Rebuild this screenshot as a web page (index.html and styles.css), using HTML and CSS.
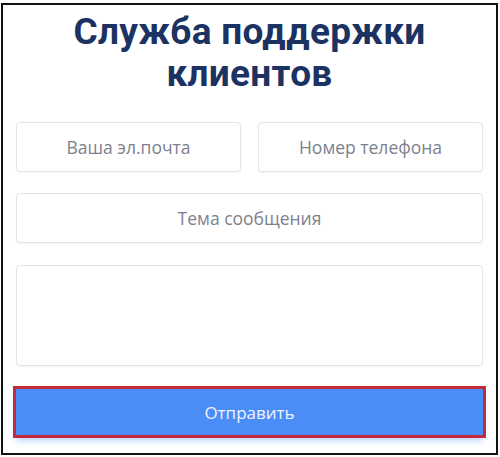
FILE: index.html
```html
<!DOCTYPE html>
<html lang="ru">
<head>
<meta charset="utf-8">
<title>Служба поддержки клиентов</title>
<link rel="stylesheet" href="styles.css">
</head>
<body>
<div class="frame">
  <h1 class="title">Служба поддержки<br>клиентов</h1>
  <form class="form">
    <div class="row">
      <div class="field">Ваша эл.почта</div>
      <div class="field">Номер телефона</div>
    </div>
    <div class="field">Тема сообщения</div>
    <div class="field area"></div>
    <div class="button">Отправить</div>
  </form>
</div>
</body>
</html>
```
FILE: styles.css
```css
html, body {
  margin: 0;
  padding: 0;
  background: #fff;
}
body {
  width: 500px;
  height: 457px;
  overflow: hidden;
  font-family: "Open Sans", "Noto Sans", sans-serif;
}
.frame {
  box-sizing: border-box;
  margin: 3px 0 0 1px;
  width: 497px;
  height: 452px;
  border: 2px solid #111;
  padding: 6px 13px 0 13px;
}
.title {
  margin: 0;
  text-align: center;
  font-family: Roboto, "Open Sans", sans-serif;
  font-weight: 700;
  font-size: 37px;
  line-height: 42px;
  color: #1b3262;
  letter-spacing: 0.3px;
}
.form {
  margin-top: 27px;
  display: flex;
  flex-direction: column;
  gap: 21px;
}
.row {
  display: flex;
  gap: 17px;
}
.row .field {
  flex: 1;
}
.field {
  box-sizing: border-box;
  height: 50px;
  border: 1px solid #e4e4e4;
  border-radius: 4px;
  box-shadow: 0 1px 2px rgba(0, 0, 0, 0.05);
  display: flex;
  align-items: center;
  justify-content: center;
  font-size: 17.5px;
  color: #7b818e;
  background: #fff;
}
.area {
  height: 101px;
  margin-top: 1px;
}
.button {
  margin-top: 2px;
  height: 46px;
  background: #4b8df6;
  outline: 3px solid #c3283d;
  box-shadow: 0 5px 7px rgba(75, 141, 246, 0.45);
  display: flex;
  align-items: center;
  justify-content: center;
  color: #eef4ff;
  font-size: 17px;
}
```
